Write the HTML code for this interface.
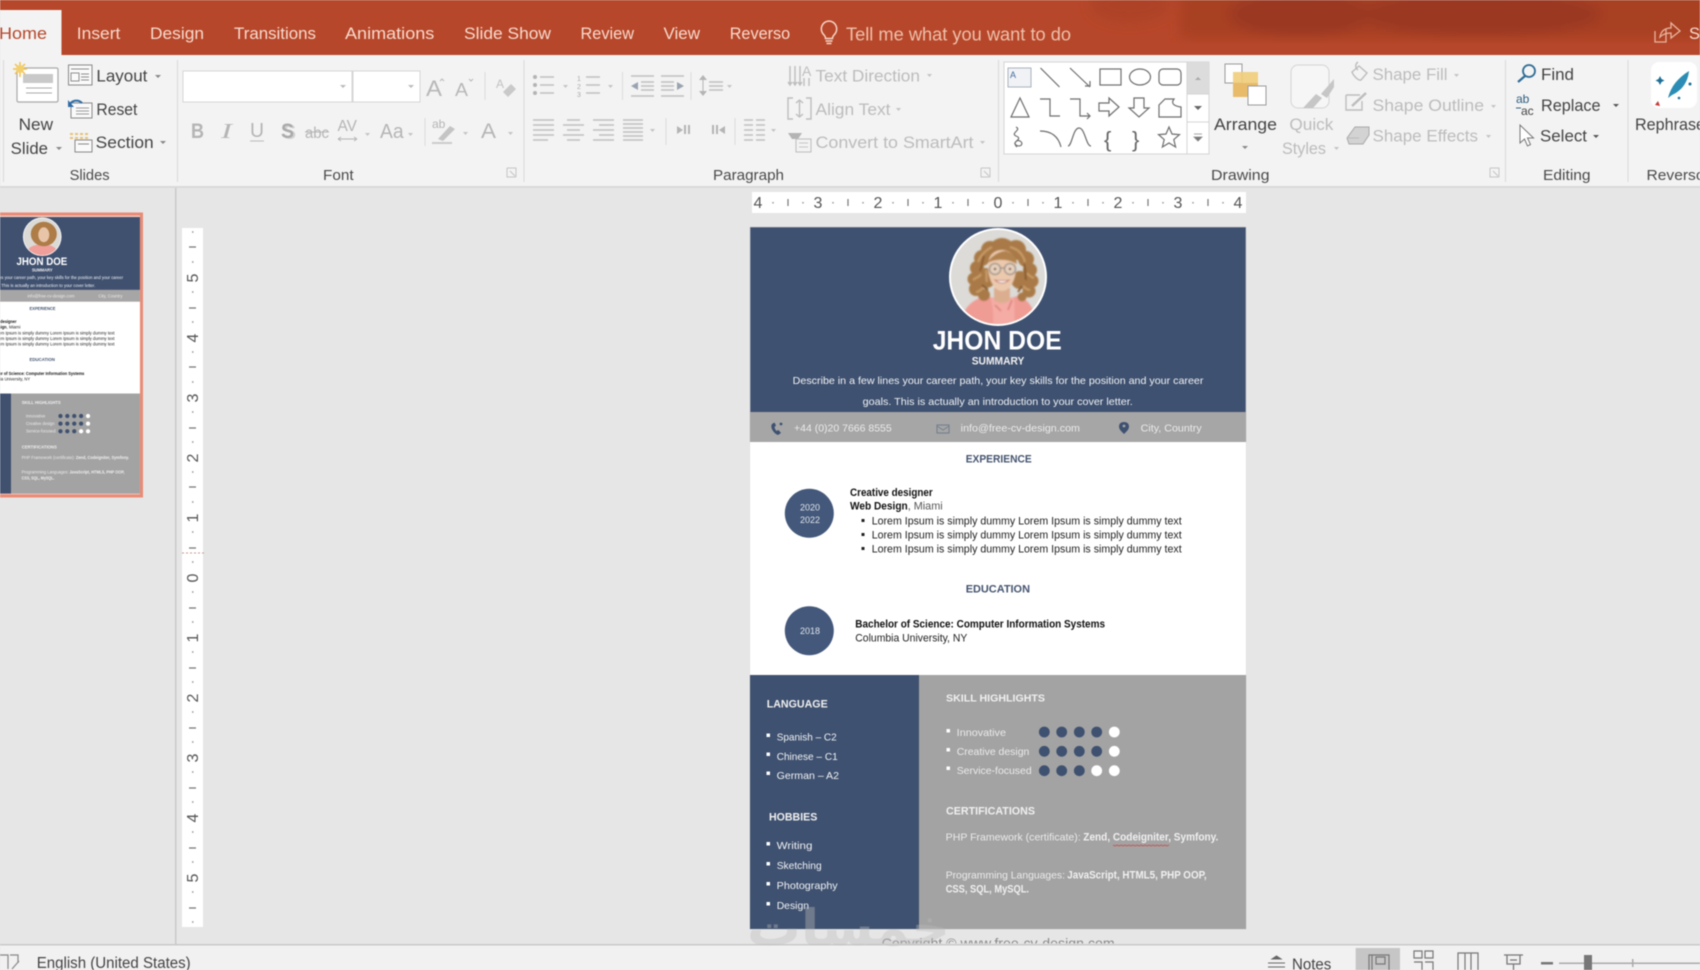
<!DOCTYPE html>
<html lang="en"><head><meta charset="utf-8"><title>PowerPoint - CV</title>
<style>
html,body{margin:0;padding:0;width:1700px;height:970px;overflow:hidden;background:#e6e6e6}
svg{display:block;filter:blur(.45px)}
text{font-family:"Liberation Sans","DejaVu Sans",sans-serif}
.tab{font-size:16.5px;fill:#f7dacd}
.rb{font-size:16.5px;fill:#444}
.gr{font-size:16.5px;fill:#bcbcbc}
.lb{font-size:15px;fill:#4a4a4a}
.ic{fill:none;stroke:#bdbdbd;stroke-width:1.4}
.dk{fill:none;stroke:#777;stroke-width:1.3}
.sh{fill:none;stroke:#6e6e6e;stroke-width:1.2}
.ar{fill:#888}
.w{font-size:10.5px;fill:#f0f2f5}
.g{font-size:10.5px;fill:#ebebeb}
.hb{font-size:11px;font-weight:bold;fill:#44546f}
.k{font-size:11px;fill:#222}
.kb{font-size:11px;fill:#111;font-weight:bold}
.wb{font-size:11px;fill:#f0f0f0;font-weight:bold}
.rn{font-size:16px;fill:#555}
</style></head><body>
<svg width="1700" height="970" viewBox="0 0 1700 970" xmlns="http://www.w3.org/2000/svg">
<defs>
<filter id="bl"><feGaussianBlur stdDeviation="6"/></filter>
<filter id="th"><feGaussianBlur stdDeviation=".35"/></filter>
<filter id="ph"><feGaussianBlur stdDeviation=".7"/></filter>
<clipPath id="pc"><circle cx="998" cy="277" r="47"/></clipPath>
<clipPath id="pc2"><circle cx="998" cy="277" r="47"/></clipPath>
<clipPath id="cp"><rect x="860" y="930" width="300" height="13.5"/></clipPath>
</defs>
<rect width="1700" height="970" fill="#e6e6e6"/>

<!-- title bar -->
<rect width="1700" height="55" fill="#b7472a"/>
<g filter="url(#bl)">
<rect x="1180" y="-10" width="530" height="48" fill="#a83f24"/>
<ellipse cx="1300" cy="14" rx="70" ry="22" fill="#9a3820"/>
<ellipse cx="1480" cy="14" rx="120" ry="22" fill="#9a3820"/>
<ellipse cx="1130" cy="5" rx="40" ry="18" fill="#ad4226"/>
</g>
<rect x="0" y="10" width="61.5" height="45" fill="#f3f3f3"/>
<text x="-1" y="39" class="tab" style="fill:#b7472a" textLength="48" lengthAdjust="spacingAndGlyphs">Home</text>
<text x="76.8" y="39" class="tab" textLength="43.6" lengthAdjust="spacingAndGlyphs">Insert</text>
<text x="150" y="39" class="tab" textLength="54" lengthAdjust="spacingAndGlyphs">Design</text>
<text x="234" y="39" class="tab" textLength="82" lengthAdjust="spacingAndGlyphs">Transitions</text>
<text x="345" y="39" class="tab" textLength="89.3" lengthAdjust="spacingAndGlyphs">Animations</text>
<text x="464" y="39" class="tab" textLength="87" lengthAdjust="spacingAndGlyphs">Slide Show</text>
<text x="580.5" y="39" class="tab" textLength="53.5" lengthAdjust="spacingAndGlyphs">Review</text>
<text x="663.5" y="39" class="tab" textLength="36.5" lengthAdjust="spacingAndGlyphs">View</text>
<text x="729.7" y="39" class="tab" textLength="60.5" lengthAdjust="spacingAndGlyphs">Reverso</text>
<path d="M829 21a8 8 0 0 0-5 14c1 1 1.500 2 1.500 3.500h7c0-1.500.5-2.500 1.500-3.500a8 8 0 0 0-5-14zM825.500 41h7M826.500 43.500h5" fill="none" stroke="#f5d5c6" stroke-width="1.500"/>
<text x="846" y="40.500" style="font-size:18px;fill:#eec0ab" textLength="225" lengthAdjust="spacingAndGlyphs">Tell me what you want to do</text>
<path d="M1666 29v13h-11V31M1660 37c1-6 5-9 11-9v-5l9 8-9 7v-5c-5 0-8 1-11 4z" fill="none" stroke="#eab49f" stroke-width="1.300"/>
<text x="1689" y="39" class="tab">S</text>

<!-- ribbon -->
<rect y="55" width="1700" height="131" fill="#f3f3f3"/>
<rect y="186" width="1700" height="2" fill="#d9d9d9"/>
<path d="M3.500 60v122M177.500 60v122M524 60v122M998.500 60v122M1505.500 60v122M1628 60v122" stroke="#dcdcdc" stroke-width="1.200"/>
<rect x="175" y="188" width="1.500" height="757" fill="#c9c9c9"/>

<!-- Slides group -->
<rect x="17" y="68" width="41" height="34" rx="1.500" fill="#fff" stroke="#a8a8a8" stroke-width="1.200"/>
<rect x="23" y="74" width="30" height="9" fill="#c9c9c9"/>
<path d="M26 88h26M26 93h26" stroke="#aaa"/>
<g stroke="#f0c050" stroke-width="1.500"><path d="M13 69h14M20 62v15M15 64l10 10M25 64l-10 10"/></g>
<circle cx="20" cy="69" r="4" fill="#f3cf6c"/>
<text x="18.600" y="130" class="rb" textLength="34.400" lengthAdjust="spacingAndGlyphs">New</text>
<text x="10.700" y="154" class="rb" textLength="37.300" lengthAdjust="spacingAndGlyphs">Slide</text>
<path class="ar" d="M56 147h6l-3 3z"/>
<rect x="68.500" y="65" width="23.500" height="20" fill="#fafafa" stroke="#888"/><path d="M71 69h18M71 73h8v8h-8zM81 74h8M81 77h8M81 80h8" stroke="#8e8e8e" fill="none"/>
<text x="96.400" y="81.700" class="rb" textLength="51" lengthAdjust="spacingAndGlyphs">Layout</text><path class="ar" d="M155 75h6l-3 3z"/>
<rect x="71" y="103" width="21" height="15" fill="#fafafa" stroke="#888"/><path d="M76 108h13M76 111h13M76 114h13" stroke="#999"/><path d="M69 106c2-6 9-7 13-3" fill="none" stroke="#2f6da8" stroke-width="2"/><path d="M68 100v7h6z" fill="#2f6da8"/>
<text x="96.400" y="115" class="rb" textLength="41" lengthAdjust="spacingAndGlyphs">Reset</text>
<path d="M70 134h20M70 138h20" stroke="#e6c378" stroke-width="2" stroke-dasharray="3 2"/><rect x="75" y="140" width="17" height="12" fill="#fafafa" stroke="#888"/><path d="M78 144h11" stroke="#888"/>
<text x="95.700" y="148" class="rb" textLength="58" lengthAdjust="spacingAndGlyphs">Section</text><path class="ar" d="M160 141h6l-3 3z"/>
<text x="69.600" y="180" class="lb" textLength="40" lengthAdjust="spacingAndGlyphs">Slides</text>

<!-- Font group -->
<rect x="183" y="71" width="169" height="31" fill="#fff" stroke="#d6d6d6"/>
<rect x="353" y="71" width="67" height="31" fill="#fff" stroke="#d6d6d6"/>
<path class="ar" style="fill:#bbb" d="M340 85h6l-3 3zM408 85h6l-3 3z"/>
<text x="426" y="96" style="font-size:22px;fill:#b8b8b8" textLength="16" lengthAdjust="spacingAndGlyphs">A</text>
<path d="M440 81l2-2 2 2" fill="none" stroke="#b8b8b8"/>
<text x="455" y="96" style="font-size:18px;fill:#b8b8b8" textLength="13" lengthAdjust="spacingAndGlyphs">A</text>
<path d="M469 79l2 2 2-2" fill="none" stroke="#b8b8b8"/>
<path d="M485 72v28" stroke="#dcdcdc"/>
<text x="496" y="88" style="font-size:12px;fill:#c2c2c2">A</text><path d="M503 92l8-8 5 5-8 8z" fill="#c9c9c9"/>
<text x="191" y="138" style="font-size:21px;font-weight:bold;fill:#b5b5b5" textLength="13" lengthAdjust="spacingAndGlyphs">B</text>
<text x="221" y="138" style="font-size:21px;font-style:italic;fill:#b5b5b5;font-family:'Liberation Serif',serif" textLength="11" lengthAdjust="spacingAndGlyphs">I</text>
<text x="250" y="137" style="font-size:20px;fill:#b5b5b5" textLength="14" lengthAdjust="spacingAndGlyphs">U</text><path d="M250 141h14" stroke="#bbb"/>
<text x="283" y="139" style="font-size:21px;font-weight:bold;fill:#d2d2d2" textLength="13" lengthAdjust="spacingAndGlyphs">S</text>
<text x="281" y="138" style="font-size:21px;font-weight:bold;fill:#aaa" textLength="13" lengthAdjust="spacingAndGlyphs">S</text>
<text x="305" y="138" style="font-size:16px;fill:#b5b5b5" textLength="24" lengthAdjust="spacingAndGlyphs">abc</text><path d="M305 132h24" stroke="#b5b5b5"/>
<text x="337.500" y="131" style="font-size:16px;fill:#b5b5b5" textLength="19.500" lengthAdjust="spacingAndGlyphs">AV</text><path d="M338 139h19M338 139l3-2M338 139l3 2M357 139l-3-2M357 139l-3 2" stroke="#b5b5b5" fill="none"/>
<path class="ar" style="fill:#c4c4c4" d="M365 133h5l-2.500 3z"/>
<text x="380" y="138" style="font-size:20px;fill:#b5b5b5" textLength="23.600" lengthAdjust="spacingAndGlyphs">Aa</text><path class="ar" style="fill:#c4c4c4" d="M408 133h5l-2.500 3z"/>
<path d="M425 118v28" stroke="#dcdcdc"/>
<text x="432" y="128" style="font-size:12px;fill:#b5b5b5">ab</text><path d="M438 139l12-13 5 3-12 12z" fill="#c4c4c4"/><path d="M432 143h20" stroke="#ccc" stroke-width="2"/>
<path class="ar" style="fill:#c4c4c4" d="M463 132h5l-2.500 3z"/>
<text x="481" y="138" style="font-size:21px;fill:#b5b5b5" textLength="15" lengthAdjust="spacingAndGlyphs">A</text>
<path class="ar" style="fill:#c4c4c4" d="M508 132h5l-2.500 3z"/>
<text x="323" y="180" class="lb" textLength="30.600" lengthAdjust="spacingAndGlyphs">Font</text>
<path d="M507 168h9v9M507 168v9h9M510 171l5 5" fill="none" stroke="#c4c4c4"/>

<!-- Paragraph group -->
<g stroke="#c0c0c0" stroke-width="1.500" fill="none">
<path d="M540 77h14M540 85h14M540 93h14M577 77h0M586 77h14M586 85h14M586 93h14"/>
<path d="M631 76h23M631 96h23M641 82h13M641 86h13M641 90h13M661 76h23M661 96h23M661 82h13M661 86h13M661 90h13"/>
<path d="M709 82h14M709 86h14M709 90h14"/>
<path d="M533 120h21M533 125h21M533 130h21M533 135h21M533 140h15M567 120h13M563 125h21M567 130h13M563 135h21M567 140h13M593 120h21M599 125h15M593 130h21M599 135h15M593 140h21M623 120h20M623 124h20M623 128h20M623 132h20M623 136h20M623 140h20"/>
<path d="M744 120h9M756 120h9M744 125h9M756 125h9M744 130h9M756 130h9M744 135h9M756 135h9M744 140h9M756 140h9"/>
</g>
<g fill="#b4b4b4"><circle cx="535" cy="77" r="2"/><circle cx="535" cy="85" r="2"/><circle cx="535" cy="93" r="2"/>
<path d="M631 86l7-4v8zM684 86l-7-4v8z" fill="#9aa4b0"/>
<path d="M703 75l-4 5h8zM703 96l-4-5h8z"/><path d="M702.500 78h1v15h-1z"/>
<path d="M677 126l6 4-6 4zM725 126l-6 4 6 4z"/><rect x="684" y="125" width="2" height="9"/><rect x="688" y="125" width="2" height="9"/><rect x="712" y="125" width="2" height="9"/><rect x="716" y="125" width="2" height="9"/></g>
<text x="577" y="81" style="font-size:7px;fill:#aaa">1</text><text x="577" y="89" style="font-size:7px;fill:#aaa">2</text><text x="577" y="97" style="font-size:7px;fill:#aaa">3</text>
<path d="M622.500 72v28M691 72v28M666 118v27M735 118v27" stroke="#dcdcdc"/>
<path class="ar" style="fill:#c4c4c4" d="M563 85h5l-2.500 3zM608 85h5l-2.500 3zM727 85h5l-2.500 3zM650 129h5l-2.500 3zM771 129h5l-2.500 3zM927 74h5l-2.500 3zM896 108h5l-2.500 3zM980 141h5l-2.500 3z"/>
<path d="M790 66v18M795 66v18M800 66v18M788 82l2 3 2-3M793 82l2 3 2-3M798 82l2 3 2-3" class="ic"/>
<text x="802" y="76" style="font-size:14px;fill:#bdbdbd">A</text><path d="M804 78v8M809 78v8" class="ic"/>
<text x="815.500" y="81.700" class="gr" textLength="104.500" lengthAdjust="spacingAndGlyphs">Text Direction</text>
<path d="M793 98h-5v21h5M806 98h5v21h-5M799.500 100v17M796 103l3.500-3 3.500 3M796 114l3.500 3 3.500-3" class="ic"/>
<text x="815.500" y="115" class="gr" textLength="75" lengthAdjust="spacingAndGlyphs">Align Text</text>
<path d="M788 133h14l-4 6h-6z" fill="#b4b4b4"/><rect x="796" y="139" width="15" height="13" fill="#f3f3f3" stroke="#bdbdbd"/><path d="M799 143h9M799 147h9" stroke="#c4c4c4"/>
<text x="815.500" y="148" class="gr" textLength="158" lengthAdjust="spacingAndGlyphs">Convert to SmartArt</text>
<text x="713" y="180" class="lb" textLength="71" lengthAdjust="spacingAndGlyphs">Paragraph</text>
<path d="M981 168h9v9M981 168v9h9M984 171l5 5" fill="none" stroke="#c4c4c4"/>

<!-- Drawing gallery -->
<rect x="1004" y="62" width="205" height="92" fill="#fff" stroke="#d4d4d4"/>
<rect x="1187" y="62" width="22" height="32" fill="#dcdcdc"/>
<path d="M1187 62v92M1187 94h22M1187 122h22" stroke="#d4d4d4"/>
<path d="M1195 80l3-3 3 3" fill="#aaa"/><path d="M1194 106h8l-4 4z" fill="#666"/><path d="M1194 134h8M1194 137h8l-4 4z" fill="#777" stroke="#888" stroke-width=".8"/>
<rect x="1008" y="68" width="23" height="19" fill="#f0f2f5" stroke="#a9b2bd"/>
<text x="1010" y="78" style="font-size:9px;fill:#446aa0">A</text>
<g class="sh">
<path d="M1040.500 68l19 19"/><path d="M1070 68l20 19M1085 86h5v-5"/>
<rect x="1100" y="69" width="21" height="16"/><ellipse cx="1140" cy="77" rx="10.500" ry="8"/><rect x="1159" y="69" width="22" height="16" rx="4"/>
<path d="M1020 98l-9 19h18z"/><path d="M1040 99h10v17h10"/><path d="M1070 99h10v17h9M1087 113l3 3-3 3"/>
<path d="M1099 103h10v-5l10 9-10 9v-5h-10z"/><path d="M1134 98h10v10h5l-10 9-10-9h5z"/><path d="M1159 117v-12l6-6h9c-3 4-1 7 7 8v10z"/>
<path d="M1016 127c6 3-6 6 0 9 8 3-5 6 0 9 5 3 8-2 4-4-4-2-7 3-3 6"/><path d="M1040 131c10 0 18 4 21 16"/><path d="M1068 146c4 0 5-18 11-18s7 18 12 18"/>
</g>
<text x="1104" y="147" style="font-size:22px;fill:#666">{</text>
<text x="1132" y="147" style="font-size:22px;fill:#666">}</text>
<path d="M1169 127l3 7 7.500.6-5.700 5 1.800 7.400-6.600-4-6.600 4 1.800-7.400-5.700-5 7.500-.6z" class="sh"/>

<!-- Arrange -->
<rect x="1225" y="64" width="17" height="19" fill="#fdfdfd" stroke="#9a9a9a"/>
<rect x="1233" y="72" width="25" height="18" fill="#f0cd7a" opacity=".9"/><rect x="1233" y="83" width="25" height="14" fill="#e7bb6a"/>
<rect x="1248" y="86" width="18" height="19" fill="#fff" stroke="#9a9a9a"/>
<text x="1214" y="130" class="rb" textLength="63" lengthAdjust="spacingAndGlyphs">Arrange</text><path class="ar" d="M1242 146h6l-3 3z"/>
<rect x="1291" y="65" width="38" height="43" rx="7" fill="#f6f6f6" stroke="#d4d4d4"/><path d="M1303 108l13-14 6 4-9 10zM1321 94l13-15v8l-7 11z" fill="#c6c6c6"/>
<text x="1289.400" y="130" class="gr" textLength="44" lengthAdjust="spacingAndGlyphs">Quick</text>
<text x="1282" y="154" class="gr" textLength="44" lengthAdjust="spacingAndGlyphs">Styles</text><path class="ar" style="fill:#c4c4c4" d="M1334 147h5l-2.500 3z"/>
<path d="M1352 72l7-6 8 7-6 7c-3 1-8-5-9-8zM1358 62c-3 2-3 6 0 8" class="ic"/>
<text x="1372.500" y="80" class="gr" textLength="75" lengthAdjust="spacingAndGlyphs">Shape Fill</text><path class="ar" style="fill:#c4c4c4" d="M1454 74h5l-2.500 3z"/>
<path d="M1346 95h14M1346 95v15h16v-9" class="ic"/><path d="M1352 106l14-13" stroke="#bdbdbd" stroke-width="2.500"/>
<text x="1372.500" y="111" class="gr" textLength="111.500" lengthAdjust="spacingAndGlyphs">Shape Outline</text><path class="ar" style="fill:#c4c4c4" d="M1491 105h5l-2.500 3z"/>
<path d="M1347 138l8-11h14v8l-6 9h-14z" fill="#d3d3d3" stroke="#a8a8a8"/><path d="M1347 138h4l8 0" stroke="#bbb"/>
<text x="1372.500" y="141.700" class="gr" textLength="105.500" lengthAdjust="spacingAndGlyphs">Shape Effects</text><path class="ar" style="fill:#c4c4c4" d="M1486 135h5l-2.500 3z"/>
<text x="1211" y="180" class="lb" textLength="58.500" lengthAdjust="spacingAndGlyphs">Drawing</text>
<path d="M1490 168h9v9M1490 168v9h9M1493 171l5 5" fill="none" stroke="#c4c4c4"/>

<!-- Editing -->
<circle cx="1529" cy="71" r="6" fill="none" stroke="#2f6d96" stroke-width="1.800"/><path d="M1525 76l-7 6" stroke="#2f6d96" stroke-width="2.200"/>
<text x="1541" y="80" class="rb" textLength="33" lengthAdjust="spacingAndGlyphs">Find</text>
<text x="1516" y="103" style="font-size:12px;fill:#2f5f80">ab</text><text x="1521" y="115" style="font-size:12px;fill:#444">ac</text><path d="M1516 108h5" stroke="#2f5f80"/>
<text x="1541" y="111" class="rb" textLength="59.600" lengthAdjust="spacingAndGlyphs">Replace</text><path class="ar" style="fill:#555" d="M1613 104h6l-3 3z"/>
<path d="M1520 125v18l4.500-4 3 7 3-1.500-3-6.500h6z" fill="#fff" stroke="#777"/>
<text x="1540" y="141.700" class="rb" textLength="47" lengthAdjust="spacingAndGlyphs">Select</text><path class="ar" style="fill:#555" d="M1593 135h6l-3 3z"/>
<text x="1543" y="180" class="lb" textLength="47.600" lengthAdjust="spacingAndGlyphs">Editing</text>

<!-- Reverso -->
<rect x="1651" y="62" width="46" height="46" rx="8" fill="#fff"/>
<path d="M1668 98c3-12 10-20 21-27-1 10-6 19-17 24z" fill="#2b8db5"/>
<path d="M1660 76l1.500 3 3 1.500-3 1.500-1.500 3-1.500-3-3-1.500 3-1.500z" fill="#1f6f96"/><circle cx="1690" cy="84" r="1.500" fill="#1f6f96"/><circle cx="1679" cy="98" r="1.300" fill="#1f6f96"/>
<path d="M1655 105l3-4 2 5z" fill="#c33a3a"/>
<text x="1635" y="130" class="rb" textLength="70" lengthAdjust="spacingAndGlyphs">Rephrase</text>
<text x="1646.500" y="180" class="lb" textLength="58" lengthAdjust="spacingAndGlyphs">Reverso</text>

<!-- Horizontal ruler -->
<rect x="752" y="192" width="494" height="21" fill="#fff"/>
<g class="rn" text-anchor="middle"><text x="758" y="208">4</text><text x="818" y="208">3</text><text x="878" y="208">2</text><text x="938" y="208">1</text><text x="998" y="208">0</text><text x="1058" y="208">1</text><text x="1118" y="208">2</text><text x="1178" y="208">3</text><text x="1238" y="208">4</text></g>
<path d="M788 199v7M848 199v7M908 199v7M968 199v7M1028 199v7M1088 199v7M1148 199v7M1208 199v7" stroke="#777" stroke-width="1.200"/>
<path d="M773 202v1.500M803 202v1.500M833 202v1.500M863 202v1.500M893 202v1.500M923 202v1.500M953 202v1.500M983 202v1.500M1013 202v1.500M1043 202v1.500M1073 202v1.500M1103 202v1.500M1133 202v1.500M1163 202v1.500M1193 202v1.500M1223 202v1.500" stroke="#999" stroke-width="1.500"/>

<!-- Vertical ruler -->
<rect x="182" y="228" width="21" height="699" fill="#fff"/>
<g class="rn" text-anchor="middle">
<text transform="translate(198 278) rotate(-90)">5</text><text transform="translate(198 338) rotate(-90)">4</text><text transform="translate(198 398) rotate(-90)">3</text><text transform="translate(198 458) rotate(-90)">2</text><text transform="translate(198 518) rotate(-90)">1</text><text transform="translate(198 578) rotate(-90)">0</text><text transform="translate(198 638) rotate(-90)">1</text><text transform="translate(198 698) rotate(-90)">2</text><text transform="translate(198 758) rotate(-90)">3</text><text transform="translate(198 818) rotate(-90)">4</text><text transform="translate(198 878) rotate(-90)">5</text>
</g>
<path d="M189 247h7M189 308h7M189 367h7M189 428h7M189 487h7M189 548h7M189 608h7M189 668h7M189 728h7M189 788h7M189 848h7M189 908h7" stroke="#777" stroke-width="1.200"/>
<path d="M192 232h1.500M192 262h1.500M192 292h1.500M192 322h1.500M192 352h1.500M192 382h1.500M192 412h1.500M192 442h1.500M192 472h1.500M192 502h1.500M192 532h1.500M192 562h1.500M192 592h1.500M192 622h1.500M192 652h1.500M192 682h1.500M192 712h1.500M192 742h1.500M192 772h1.500M192 802h1.500M192 832h1.500M192 862h1.500M192 892h1.500M192 922h1.500" stroke="#999" stroke-width="1.500"/>
<path d="M182 553h23" stroke="#c49a90" stroke-dasharray="2 2"/>

<!-- Thumbnail -->
<rect x="-4" y="214" width="145.500" height="282" fill="#f7c9bc" stroke="#e98b76" stroke-width="3"/>
<g transform="translate(-351 127.600) scale(.394)" filter="url(#th)">
<rect x="750" y="227" width="496" height="185" fill="#3f5170"/>
<rect x="750" y="412" width="496" height="30" fill="#a6a6a6"/>
<rect x="750" y="442" width="496" height="233" fill="#fff"/>
<rect x="750" y="675" width="169" height="254" fill="#3f5170"/>
<rect x="919" y="675" width="327" height="254" fill="#a3a3a3"/>
<circle cx="998" cy="277" r="49" fill="#fff"/>
<g clip-path="url(#pc2)"><rect x="945" y="225" width="110" height="100" fill="#dbdad6"/><ellipse cx="998" cy="316" rx="38" ry="20" fill="#ef9e9a"/><ellipse cx="1002" cy="270" rx="33" ry="31" fill="#ad7c47"/><ellipse cx="1002" cy="272" rx="14" ry="19" fill="#e8c4a8"/></g>
<text x="932.700" y="349.300" style="font-size:27px;font-weight:bold;fill:#fff" textLength="129" lengthAdjust="spacingAndGlyphs">JHON DOE</text>
<text x="971.700" y="364.700" class="wb" textLength="52.700" lengthAdjust="spacingAndGlyphs">SUMMARY</text>
<text x="792.700" y="384" class="w" textLength="410.700" lengthAdjust="spacingAndGlyphs">Describe in a few lines your career path, your key skills for the position and your career</text>
<text x="862.700" y="405" class="w" textLength="270" lengthAdjust="spacingAndGlyphs">goals. This is actually an introduction to your cover letter.</text>
<text x="794" y="431.700" class="g" textLength="97.700" lengthAdjust="spacingAndGlyphs">+44 (0)20 7666 8555</text>
<text x="960.700" y="431.700" class="g" textLength="119.300" lengthAdjust="spacingAndGlyphs">info@free-cv-design.com</text>
<text x="1140.700" y="431.700" class="g" textLength="61" lengthAdjust="spacingAndGlyphs">City, Country</text>
<text x="965.700" y="462.700" class="hb" textLength="66" lengthAdjust="spacingAndGlyphs">EXPERIENCE</text>
<circle cx="809.300" cy="513.300" r="24.500" fill="#43587a"/>
<text x="850" y="496" class="kb" textLength="82.700" lengthAdjust="spacingAndGlyphs">Creative designer</text>
<text x="850" y="509.300" class="kb" textLength="57.700" lengthAdjust="spacingAndGlyphs">Web Design</text>
<text x="907.700" y="509.300" class="k" textLength="35" lengthAdjust="spacingAndGlyphs">, Miami</text>
<text x="871.700" y="524.700" class="k" textLength="310" lengthAdjust="spacingAndGlyphs">Lorem Ipsum is simply dummy Lorem Ipsum is simply dummy text</text>
<text x="871.700" y="538.700" class="k" textLength="310" lengthAdjust="spacingAndGlyphs">Lorem Ipsum is simply dummy Lorem Ipsum is simply dummy text</text>
<text x="871.700" y="552.700" class="k" textLength="310" lengthAdjust="spacingAndGlyphs">Lorem Ipsum is simply dummy Lorem Ipsum is simply dummy text</text>
<text x="965.700" y="592.700" class="hb" textLength="64.300" lengthAdjust="spacingAndGlyphs">EDUCATION</text>
<text x="855.300" y="627.700" class="kb" textLength="249.700" lengthAdjust="spacingAndGlyphs">Bachelor of Science: Computer Information Systems</text>
<text x="855.300" y="641.700" class="k" textLength="112" lengthAdjust="spacingAndGlyphs">Columbia University, NY</text>
<text x="946" y="701.700" class="wb" textLength="99" lengthAdjust="spacingAndGlyphs">SKILL HIGHLIGHTS</text>
<text x="956.700" y="736" class="g" textLength="49.300" lengthAdjust="spacingAndGlyphs">Innovative</text>
<text x="956.700" y="755" class="g" textLength="72.700" lengthAdjust="spacingAndGlyphs">Creative design</text>
<text x="956.700" y="774" class="g" textLength="75" lengthAdjust="spacingAndGlyphs">Service-focused</text>
<g fill="#3f5170"><circle cx="1044.300" cy="732" r="5.400"/><circle cx="1061.700" cy="732" r="5.400"/><circle cx="1079.300" cy="732" r="5.400"/><circle cx="1096.700" cy="732" r="5.400"/><circle cx="1044.300" cy="751.300" r="5.400"/><circle cx="1061.700" cy="751.300" r="5.400"/><circle cx="1079.300" cy="751.300" r="5.400"/><circle cx="1096.700" cy="751.300" r="5.400"/><circle cx="1044.300" cy="770.700" r="5.400"/><circle cx="1061.700" cy="770.700" r="5.400"/><circle cx="1079.300" cy="770.700" r="5.400"/></g>
<g fill="#fff"><circle cx="1114.300" cy="732" r="5.400"/><circle cx="1114.300" cy="751.300" r="5.400"/><circle cx="1096.700" cy="770.700" r="5.400"/><circle cx="1114.300" cy="770.700" r="5.400"/></g>
<text x="946" y="814.700" class="wb" textLength="89" lengthAdjust="spacingAndGlyphs">CERTIFICATIONS</text>
<text x="945.700" y="840.700" class="g" textLength="135" lengthAdjust="spacingAndGlyphs">PHP Framework (certificate):</text>
<text x="1083.300" y="840.700" class="wb" textLength="135" lengthAdjust="spacingAndGlyphs">Zend, Codeigniter, Symfony.</text>
<text x="945.700" y="878.300" class="g" textLength="119.300" lengthAdjust="spacingAndGlyphs">Programming Languages:</text>
<text x="1067.300" y="878.300" class="wb" textLength="139.300" lengthAdjust="spacingAndGlyphs">JavaScript, HTML5, PHP OOP,</text>
<text x="945.700" y="892.700" class="wb" textLength="83.300" lengthAdjust="spacingAndGlyphs">CSS, SQL, MySQL.</text>
</g>

<!-- Main slide -->
<rect x="750" y="227" width="496" height="702" fill="#3f5170" stroke="#cfcfcf" stroke-width=".6"/>
<rect x="750" y="412" width="496" height="30" fill="#a6a6a6"/>
<rect x="750" y="442" width="496" height="233" fill="#fff"/>
<rect x="750" y="675" width="169" height="254" fill="#3f5170"/>
<rect x="919" y="675" width="327" height="254" fill="#a3a3a3"/>

<!-- Photo -->
<circle cx="998" cy="277" r="49" fill="#fff"/>
<g clip-path="url(#pc)">
<rect x="945" y="225" width="110" height="100" fill="#dcdbd8"/>
<g filter="url(#ph)">
<path d="M960 326c2-16 10-26 26-30l16 4 16-4c10 3 17 12 19 30z" fill="#ef9c94"/>
<path d="M990 297c2 6 4 14 3 29h22c-1-12 0-22-1-29l-10 5z" fill="#f4aca4"/>
<path d="M995 305l6 6M1012 300l-4 10" stroke="#d97f78" stroke-width="1.500" fill="none"/>
<g fill="#a97a46">
<circle cx="1002" cy="252" r="14"/><circle cx="990" cy="250" r="9"/><circle cx="1016" cy="250" r="10"/><circle cx="982" cy="258" r="8"/><circle cx="1026" cy="259" r="8"/>
<circle cx="977" cy="268" r="7"/><circle cx="1030" cy="270" r="7"/><circle cx="974" cy="279" r="6.500"/><circle cx="1032" cy="281" r="6.500"/><circle cx="976" cy="289" r="7"/><circle cx="1029" cy="291" r="6.500"/><circle cx="984" cy="295" r="6"/><circle cx="1022" cy="297" r="4.500"/><circle cx="986" cy="278" r="10"/><circle cx="1020" cy="280" r="9"/>
</g>
<path d="M978 262c3-8 8-12 14-15M973 280c3-3 6-2 8-6M976 292c4 0 5-3 8-5M1010 247c8 2 13 7 15 15M1034 278c-3-1-5-2-7-5M1030 290c-3 0-5-2-7-4M986 270c1 5 0 8 1 12" stroke="#c99c68" stroke-width="2" fill="none"/>
<path d="M984 256c-2 6-2 10-4 15M1024 264c2 6 1 10 2 16M982 285l6 5M1018 292l4-6" stroke="#86582d" stroke-width="1.800" fill="none"/>
<path d="M994 288h16v12c-4 4-12 4-16 0z" fill="#dcae90"/>
<path d="M988 266c0-11 6-16 14-16s14 6 14 17c0 13-6 24-14 24s-14-12-14-25z" fill="#ecc9ad"/>
<path d="M987 263c5-8 13-12 19-12 6 2 10 6 11 13-8-5-21-6-30-1z" fill="#b1824e"/>
<circle cx="995" cy="269" r="5.500" fill="#e4d5c6" fill-opacity=".6" stroke="#7a7a78" stroke-width="1"/><circle cx="1010" cy="269" r="5.500" fill="#e4d5c6" fill-opacity=".6" stroke="#7a7a78" stroke-width="1"/><path d="M1000.500 268h4" stroke="#7a7a78"/>
<circle cx="995" cy="269" r="1.200" fill="#5a4535"/><circle cx="1010" cy="269" r="1.200" fill="#5a4535"/>
<path d="M995 280c4 4 10 4 14 0-3 .8-11 .8-14 0z" fill="#fff" stroke="#c2766c" stroke-width=".9"/>
</g>
</g>

<text x="932.700" y="349.300" style="font-size:27px;font-weight:bold;fill:#fff" textLength="129" lengthAdjust="spacingAndGlyphs">JHON DOE</text>
<text x="971.700" y="364.700" class="wb" textLength="52.700" lengthAdjust="spacingAndGlyphs">SUMMARY</text>
<text x="792.700" y="384" class="w" textLength="410.700" lengthAdjust="spacingAndGlyphs">Describe in a few lines your career path, your key skills for the position and your career</text>
<text x="862.700" y="405" class="w" textLength="270" lengthAdjust="spacingAndGlyphs">goals. This is actually an introduction to your cover letter.</text>

<path d="M772 424c-2 3 1 9 6 11l3-2-2.500-3-2 1c-1-1-2-3-2-4l1.500-1.500-1.500-3z" fill="#3f5170"/><circle cx="781" cy="424" r="1.400" fill="#3f5170"/>
<text x="794" y="431.700" class="g" textLength="97.700" lengthAdjust="spacingAndGlyphs">+44 (0)20 7666 8555</text>
<rect x="937" y="425" width="12" height="8" fill="none" stroke="#76808f" stroke-width="1.100"/><path d="M937 426l6 4 6-4" fill="none" stroke="#76808f"/>
<text x="960.700" y="431.700" class="g" textLength="119.300" lengthAdjust="spacingAndGlyphs">info@free-cv-design.com</text>
<path d="M1124 422c-6 0-6 6-3 9l3 3 3-3c3-3 3-9-3-9z" fill="#3f5170"/><circle cx="1124" cy="426" r="1.400" fill="#a6a6a6"/>
<text x="1140.700" y="431.700" class="g" textLength="61" lengthAdjust="spacingAndGlyphs">City, Country</text>

<text x="965.700" y="462.700" class="hb" textLength="66" lengthAdjust="spacingAndGlyphs">EXPERIENCE</text>
<circle cx="809.300" cy="513.300" r="24.500" fill="#43587a"/>
<text x="800" y="510.700" style="font-size:9px;fill:#dfe4ec" textLength="20" lengthAdjust="spacingAndGlyphs">2020</text>
<text x="800" y="523" style="font-size:9px;fill:#dfe4ec" textLength="20" lengthAdjust="spacingAndGlyphs">2022</text>
<text x="850" y="496" class="kb" textLength="82.700" lengthAdjust="spacingAndGlyphs">Creative designer</text>
<text x="850" y="509.300" class="kb" textLength="57.700" lengthAdjust="spacingAndGlyphs">Web Design</text>
<text x="907.700" y="509.300" class="k" style="fill:#555" textLength="35" lengthAdjust="spacingAndGlyphs">, Miami</text>
<rect x="861.500" y="519" width="3" height="3" fill="#222"/><rect x="861.500" y="533" width="3" height="3" fill="#222"/><rect x="861.500" y="547" width="3" height="3" fill="#222"/>
<text x="871.700" y="524.700" class="k" textLength="310" lengthAdjust="spacingAndGlyphs">Lorem Ipsum is simply dummy Lorem Ipsum is simply dummy text</text>
<text x="871.700" y="538.700" class="k" textLength="310" lengthAdjust="spacingAndGlyphs">Lorem Ipsum is simply dummy Lorem Ipsum is simply dummy text</text>
<text x="871.700" y="552.700" class="k" textLength="310" lengthAdjust="spacingAndGlyphs">Lorem Ipsum is simply dummy Lorem Ipsum is simply dummy text</text>
<text x="965.700" y="592.700" class="hb" textLength="64.300" lengthAdjust="spacingAndGlyphs">EDUCATION</text>
<circle cx="809.300" cy="630.700" r="24.500" fill="#43587a"/>
<text x="800" y="634" style="font-size:9px;fill:#dfe4ec" textLength="20" lengthAdjust="spacingAndGlyphs">2018</text>
<text x="855.300" y="627.700" class="kb" textLength="249.700" lengthAdjust="spacingAndGlyphs">Bachelor of Science: Computer Information Systems</text>
<text x="855.300" y="641.700" class="k" textLength="112" lengthAdjust="spacingAndGlyphs">Columbia University, NY</text>

<text x="766.700" y="707.700" class="wb" textLength="61" lengthAdjust="spacingAndGlyphs">LANGUAGE</text>
<g fill="#fff"><rect x="766.500" y="733.500" width="3.500" height="3.500"/><rect x="766.500" y="752.500" width="3.500" height="3.500"/><rect x="766.500" y="771.500" width="3.500" height="3.500"/><rect x="766.500" y="842" width="3.500" height="3.500"/><rect x="766.500" y="862" width="3.500" height="3.500"/><rect x="766.500" y="882" width="3.500" height="3.500"/><rect x="766.500" y="902" width="3.500" height="3.500"/><rect x="946.500" y="729" width="3.500" height="3.500"/><rect x="946.500" y="748" width="3.500" height="3.500"/><rect x="946.500" y="766.500" width="3.500" height="3.500"/></g>
<text x="776.700" y="740.700" class="w" textLength="60" lengthAdjust="spacingAndGlyphs">Spanish – C2</text>
<text x="776.700" y="760" class="w" textLength="61" lengthAdjust="spacingAndGlyphs">Chinese – C1</text>
<text x="776.700" y="779" class="w" textLength="62.300" lengthAdjust="spacingAndGlyphs">German – A2</text>
<text x="769" y="820.700" class="wb" textLength="48.300" lengthAdjust="spacingAndGlyphs">HOBBIES</text>
<text x="776.700" y="849" class="w" textLength="35.700" lengthAdjust="spacingAndGlyphs">Writing</text>
<text x="776.700" y="869" class="w" textLength="45" lengthAdjust="spacingAndGlyphs">Sketching</text>
<text x="776.700" y="889" class="w" textLength="61" lengthAdjust="spacingAndGlyphs">Photography</text>
<text x="776.700" y="909" class="w" textLength="32.300" lengthAdjust="spacingAndGlyphs">Design</text>

<text x="946" y="701.700" class="wb" style="font-size:10.500px" textLength="99" lengthAdjust="spacingAndGlyphs">SKILL HIGHLIGHTS</text>
<text x="956.700" y="736" class="g" textLength="49.300" lengthAdjust="spacingAndGlyphs">Innovative</text>
<text x="956.700" y="755" class="g" textLength="72.700" lengthAdjust="spacingAndGlyphs">Creative design</text>
<text x="956.700" y="774" class="g" textLength="75" lengthAdjust="spacingAndGlyphs">Service-focused</text>
<g fill="#3f5170"><circle cx="1044.300" cy="732" r="5.400"/><circle cx="1061.700" cy="732" r="5.400"/><circle cx="1079.300" cy="732" r="5.400"/><circle cx="1096.700" cy="732" r="5.400"/><circle cx="1044.300" cy="751.300" r="5.400"/><circle cx="1061.700" cy="751.300" r="5.400"/><circle cx="1079.300" cy="751.300" r="5.400"/><circle cx="1096.700" cy="751.300" r="5.400"/><circle cx="1044.300" cy="770.700" r="5.400"/><circle cx="1061.700" cy="770.700" r="5.400"/><circle cx="1079.300" cy="770.700" r="5.400"/></g>
<g fill="#fff"><circle cx="1114.300" cy="732" r="5.400"/><circle cx="1114.300" cy="751.300" r="5.400"/><circle cx="1096.700" cy="770.700" r="5.400"/><circle cx="1114.300" cy="770.700" r="5.400"/></g>
<text x="946" y="814.700" class="wb" textLength="89" lengthAdjust="spacingAndGlyphs">CERTIFICATIONS</text>
<text x="945.700" y="840.700" class="g" textLength="135" lengthAdjust="spacingAndGlyphs">PHP Framework (certificate):</text>
<text x="1083.300" y="840.700" class="wb" textLength="135" lengthAdjust="spacingAndGlyphs">Zend, Codeigniter, Symfony.</text>
<path d="M1113 845l2 1 2-1 2 1 2-1 2 1 2-1 2 1 2-1 2 1 2-1 2 1 2-1 2 1 2-1 2 1 2-1 2 1 2-1 2 1 2-1 2 1 2-1 2 1 2-1 2 1 2-1 2 1 2-1" fill="none" stroke="#c9504f" stroke-width=".8"/>
<text x="945.700" y="878.300" class="g" textLength="119.300" lengthAdjust="spacingAndGlyphs">Programming Languages:</text>
<text x="1067.300" y="878.300" class="wb" textLength="139.300" lengthAdjust="spacingAndGlyphs">JavaScript, HTML5, PHP OOP,</text>
<text x="945.700" y="892.700" class="wb" textLength="83.300" lengthAdjust="spacingAndGlyphs">CSS, SQL, MySQL.</text>

<text x="881.700" y="948" clip-path="url(#cp)" style="font-size:14px;fill:#8a8a8a" textLength="233" lengthAdjust="spacingAndGlyphs">Copyright © www.free-cv-design.com</text>

<!-- Status bar -->
<rect y="945" width="1700" height="25" fill="#f1f1f1"/>
<rect y="944" width="1700" height="1.500" fill="#c9c9c9"/>
<path d="M0 955h8v14M10 955h8v8M12 969l7-8" fill="none" stroke="#888" stroke-width="1.200"/>
<text x="36.700" y="968" style="font-size:15.500px;fill:#444" textLength="154" lengthAdjust="spacingAndGlyphs">English (United States)</text>
<path d="M1268 963h17M1268 967h17M1272 959l4.500-3 4.500 3z" stroke="#666" fill="#666" stroke-width="1"/>
<text x="1292" y="969.300" style="font-size:15.500px;fill:#444" textLength="39.300" lengthAdjust="spacingAndGlyphs">Notes</text>
<rect x="1355.700" y="948" width="44.300" height="22" fill="#c6c6c6"/>
<path d="M1369 971v-16h20v16M1372 955v16M1376 957h9v7h-9z" fill="none" stroke="#777" stroke-width="1.200"/>
<path d="M1414 951h8v7h-8zM1425 951h8v7h-8zM1414 962h8v9M1425 962h8v9" fill="none" stroke="#777" stroke-width="1.200"/>
<path d="M1458 971v-18h20v18M1465 953v18M1471 953v18" fill="none" stroke="#777" stroke-width="1.200"/>
<path d="M1504 955h19M1507 955v9h13v-9M1513.500 964v6M1510 960h7" fill="none" stroke="#777" stroke-width="1.300"/>
<rect x="1541" y="962" width="12" height="2.500" fill="#777"/>
<rect x="1559" y="962.500" width="141" height="1.500" fill="#aaa"/>
<rect x="1584" y="955" width="8" height="15" fill="#777"/>
<rect x="1632" y="959" width="1.500" height="8" fill="#aaa"/>

<!-- watermark -->
<text x="747" y="945" textLength="203" lengthAdjust="spacingAndGlyphs" style="font-family:'DejaVu Sans',sans-serif;font-size:50px;font-weight:bold;fill:#bdbdbd;opacity:.38">خمسات</text>
</svg>
</body></html>
